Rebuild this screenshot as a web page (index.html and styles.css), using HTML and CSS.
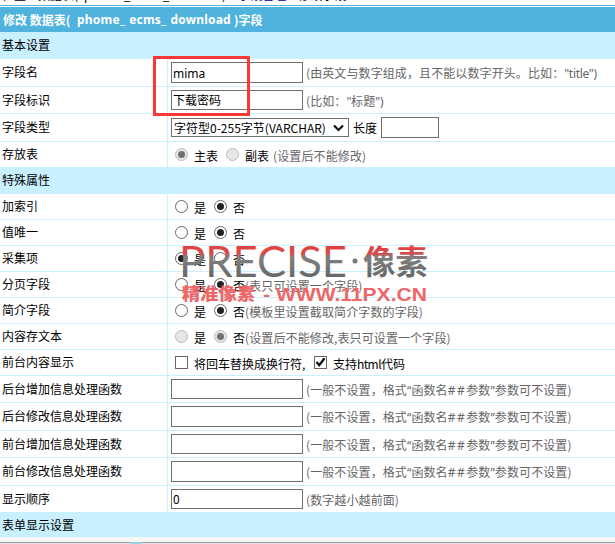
FILE: index.html
```html
<!DOCTYPE html>
<html lang="zh-CN">
<head>
<meta charset="utf-8">
<title>修改字段</title>
<link rel="stylesheet" href="styles.css">
</head>
<body>
<div class="crumb"><span>位置：数据表(</span><span class="c2">phome_ ecms_ download</span><span class="c3">) &gt; <a>字段管理</a> &gt; 修改字段</span></div>
<div class="panel">
<h1><span class="t1">修改 数据表(</span><span class="t2">phome_ ecms_ download</span><span class="t3">)字段</span></h1>
<div class="section">基本设置</div>
<div class="row h28"><div class="label">字段名</div><div class="field"><span class="input tall"><span class="mima">mima</span></span><span class="hint">(由英文与数字组成，且不能以数字开头。比如：<span class="lat">"title")</span></span></div></div>
<div class="row h27"><div class="label">字段标识</div><div class="field"><span class="input">下载密码</span><span class="hint">(比如：<span class="lat">"</span>标题<span class="lat">")</span></span></div></div>
<div class="row h28"><div class="label">字段类型</div><div class="field"><span class="select"><span>字符型<span class="num">0-255</span>字节<span class="var">(VARCHAR)</span></span><svg width="11" height="8" viewBox="0 0 11 8"><path d="M1 1.5 5.5 6 10 1.5" fill="none" stroke="#111" stroke-width="2.2"/></svg></span><span class="len">长度</span><span class="input tall short"></span></div></div>
<div class="row h25 opt"><div class="label">存放表</div><div class="field"><i class="radio on off"></i><span class="w32">主表</span><i class="radio off"></i><span class="w28">副表</span><span class="hint">(设置后不能修改)</span></div></div>
<div class="section">特殊属性</div>
<div class="row opt"><div class="label">加索引</div><div class="field"><i class="radio"></i><span class="yes">是</span><i class="radio on"></i><span>否</span></div></div>
<div class="row opt"><div class="label">值唯一</div><div class="field"><i class="radio"></i><span class="yes">是</span><i class="radio on"></i><span>否</span></div></div>
<div class="row opt"><div class="label">采集项</div><div class="field"><i class="radio on"></i><span class="yes">是</span><i class="radio"></i><span>否</span></div></div>
<div class="row opt"><div class="label">分页字段</div><div class="field"><i class="radio"></i><span class="yes">是</span><i class="radio on"></i><span>否</span><span class="hint">(表只可设置一个字段)</span></div></div>
<div class="row opt"><div class="label">简介字段</div><div class="field"><i class="radio"></i><span class="yes">是</span><i class="radio on"></i><span>否</span><span class="hint">(模板里设置截取简介字数的字段)</span></div></div>
<div class="row opt"><div class="label">内容存文本</div><div class="field"><i class="radio off"></i><span class="yes">是</span><i class="radio on off"></i><span>否</span><span class="hint">(设置后不能修改,表只可设置一个字段)</span></div></div>
<div class="row opt"><div class="label">前台内容显示</div><div class="field"><i class="check"></i><span class="w120">将回车替换成换行符,</span><i class="check"><svg width="11" height="11" viewBox="0 0 11 11"><path d="M1.5 5 4.3 8.2 9.5 1.2" fill="none" stroke="#111" stroke-width="2.3"/></svg></i><span>支持<span class="html">html</span>代码</span></div></div>
<div class="row h27"><div class="label">后台增加信息处理函数</div><div class="field"><span class="input"></span><span class="hint">(一般不设置，格式<q>“</q>函数名<b>##</b>参数<q>”</q>参数可不设置)</span></div></div>
<div class="row h28"><div class="label">后台修改信息处理函数</div><div class="field"><span class="input tall"></span><span class="hint">(一般不设置，格式<q>“</q>函数名<b>##</b>参数<q>”</q>参数可不设置)</span></div></div>
<div class="row h27"><div class="label">前台增加信息处理函数</div><div class="field"><span class="input"></span><span class="hint">(一般不设置，格式<q>“</q>函数名<b>##</b>参数<q>”</q>参数可不设置)</span></div></div>
<div class="row h28"><div class="label">前台修改信息处理函数</div><div class="field"><span class="input tall"></span><span class="hint">(一般不设置，格式<q>“</q>函数名<b>##</b>参数<q>”</q>参数可不设置)</span></div></div>
<div class="row last"><div class="label">显示顺序</div><div class="field"><span class="input">0</span><span class="hint">(数字越小越前面)</span></div></div>
<div class="section end">表单显示设置</div>
</div>
<div class="scroll"></div>
<div class="marker"></div>
<svg class="mark" width="260" height="66" viewBox="0 0 260 66">
<defs><linearGradient id="g" gradientUnits="userSpaceOnUse" x1="0" y1="3" x2="0" y2="36"><stop offset="0" stop-color="#e64040"/><stop offset=".24" stop-color="#d84a4a"/><stop offset=".38" stop-color="#808080"/><stop offset="1" stop-color="#666"/></linearGradient></defs>
<text class="brand" x="0" y="35" textLength="168" lengthAdjust="spacingAndGlyphs" fill="url(#g)">PRECISE</text>
<circle cx="176" cy="19" r="2.5" fill="#777"/>
<text class="brandcn" x="184" y="32" textLength="65" lengthAdjust="spacingAndGlyphs" fill="url(#g)">像素</text>
<text class="subcn" x="3" y="58" textLength="73" lengthAdjust="spacingAndGlyphs">精准像素</text>
<text class="sub" x="84" y="58.5" textLength="164" lengthAdjust="spacingAndGlyphs">- WWW.11PX.CN</text>
</svg>
</body>
</html>
```
FILE: styles.css
```css
* { box-sizing: border-box; }
body { margin: 0; width: 615px; height: 544px; overflow: hidden; position: relative; background: #fff; color: #000; font: 12px/16px "Noto Sans CJK SC", sans-serif; white-space: nowrap; }
.crumb { height: 5px; overflow: hidden; display: flex; line-height: 16px; padding-left: 2px; }
.crumb span { margin-top: -13px; }
.crumb a { color: #00008b; }
.crumb .c2 { width: 138px; margin-left: 6px; }
.panel { border-top: 1px solid #4fb3de; }
h1 { margin: 1px 0 0; height: 25px; padding-left: 3px; background: #4fb3de; color: #fff; font-size: 12px; line-height: 25px; display: flex; }
.t1 { width: 74px; }
.t2 { width: 157px; font-family: "Noto Sans", sans-serif; font-size: 12px; letter-spacing: .2px; word-spacing: 1px; }
.section { height: 27px; padding-left: 2px; line-height: 26px; background: #c9f0ff; }
.section.end { height: 25px; }
.row { display: flex; height: 26px; border-bottom: 1px solid #c9f0ff; }
.h28 { height: 28px; }
.h27 { height: 27px; }
.h25 { height: 25px; border-bottom: 0; }
.last { border-bottom: 0; }
.label { width: 168px; flex: none; padding-left: 2px; border-right: 1px solid #c9f0ff; line-height: 26px; }
.opt .label { line-height: 24px; }
.field { display: flex; align-items: flex-start; padding: 3px 0 0 3px; }
.input { width: 132px; height: 20px; border: 1px solid #707070; background: #fff; padding-left: 1px; line-height: 18px; flex: none; }
.tall { height: 21px; line-height: 19px; }
.short { width: 58px; }
.mima { font: 12px/19px "Noto Sans", sans-serif; }
.hint { color: #666; line-height: 21px; margin-left: 3px; letter-spacing: .1px; }
.lat { font-family: "Noto Sans", sans-serif; font-size: 12px; letter-spacing: -.3px; }
.select { width: 178px; height: 19px; margin-top: 1px; border: 1px solid #707070; padding: 0 4px 0 2px; line-height: 17px; display: flex; justify-content: space-between; align-items: center; }
.len { width: 24px; margin: 0 4px; line-height: 21px; }
.opt .field { padding: 0 0 0 7px; }
.opt .field > span { line-height: 28px; }
.opt .hint { margin-left: 0; letter-spacing: .12px; }
.radio, .check { width: 13px; height: 13px; flex: none; margin: 6px 6px 0 0; border: 1px solid #666; background: #fff; }
.radio { border-radius: 50%; display: flex; }
.radio.on::after { content: ""; width: 7px; height: 7px; border-radius: 50%; background: #222; margin: 2px; }
.radio.off { border-color: #bbb; background: #e6e6e6; }
.radio.off.on::after { background: #707070; }
.check svg { display: block; }
.w32 { width: 32px; }
.w28 { width: 28px; }
.yes { width: 20px; }
.w120 { width: 120px; }
.html { letter-spacing: -.6px; }
q { quotes: none; font-family: "Noto Sans", sans-serif; }
q::before, q::after { content: none; }
.hint b { font: 12px/16px "Noto Sans", sans-serif; letter-spacing: 1.5px; }
.scroll { height: 7px; background: #f7f7f7; border-bottom: 1px solid #e5e5e5; box-shadow: inset 0 -1px #999; }
.scroll::after { content: ""; display: block; width: 12px; height: 2px; margin-left: 130px; background: #9fd0e2; transform: translateY(5px); }
.marker { position: absolute; left: 153px; top: 56px; width: 97px; height: 60px; border: 3px solid #fb3838; }
.mark { position: absolute; left: 179px; top: 242px; }
.brand { font: 43px "Lato", sans-serif; }
.brandcn { font: bold 33px "Noto Sans CJK SC", sans-serif; }
.subcn { font: 900 17px "Noto Sans CJK SC", sans-serif; fill: #e66; }
.sub { font: bold 19px "Liberation Sans", sans-serif; fill: #e66; }
```
